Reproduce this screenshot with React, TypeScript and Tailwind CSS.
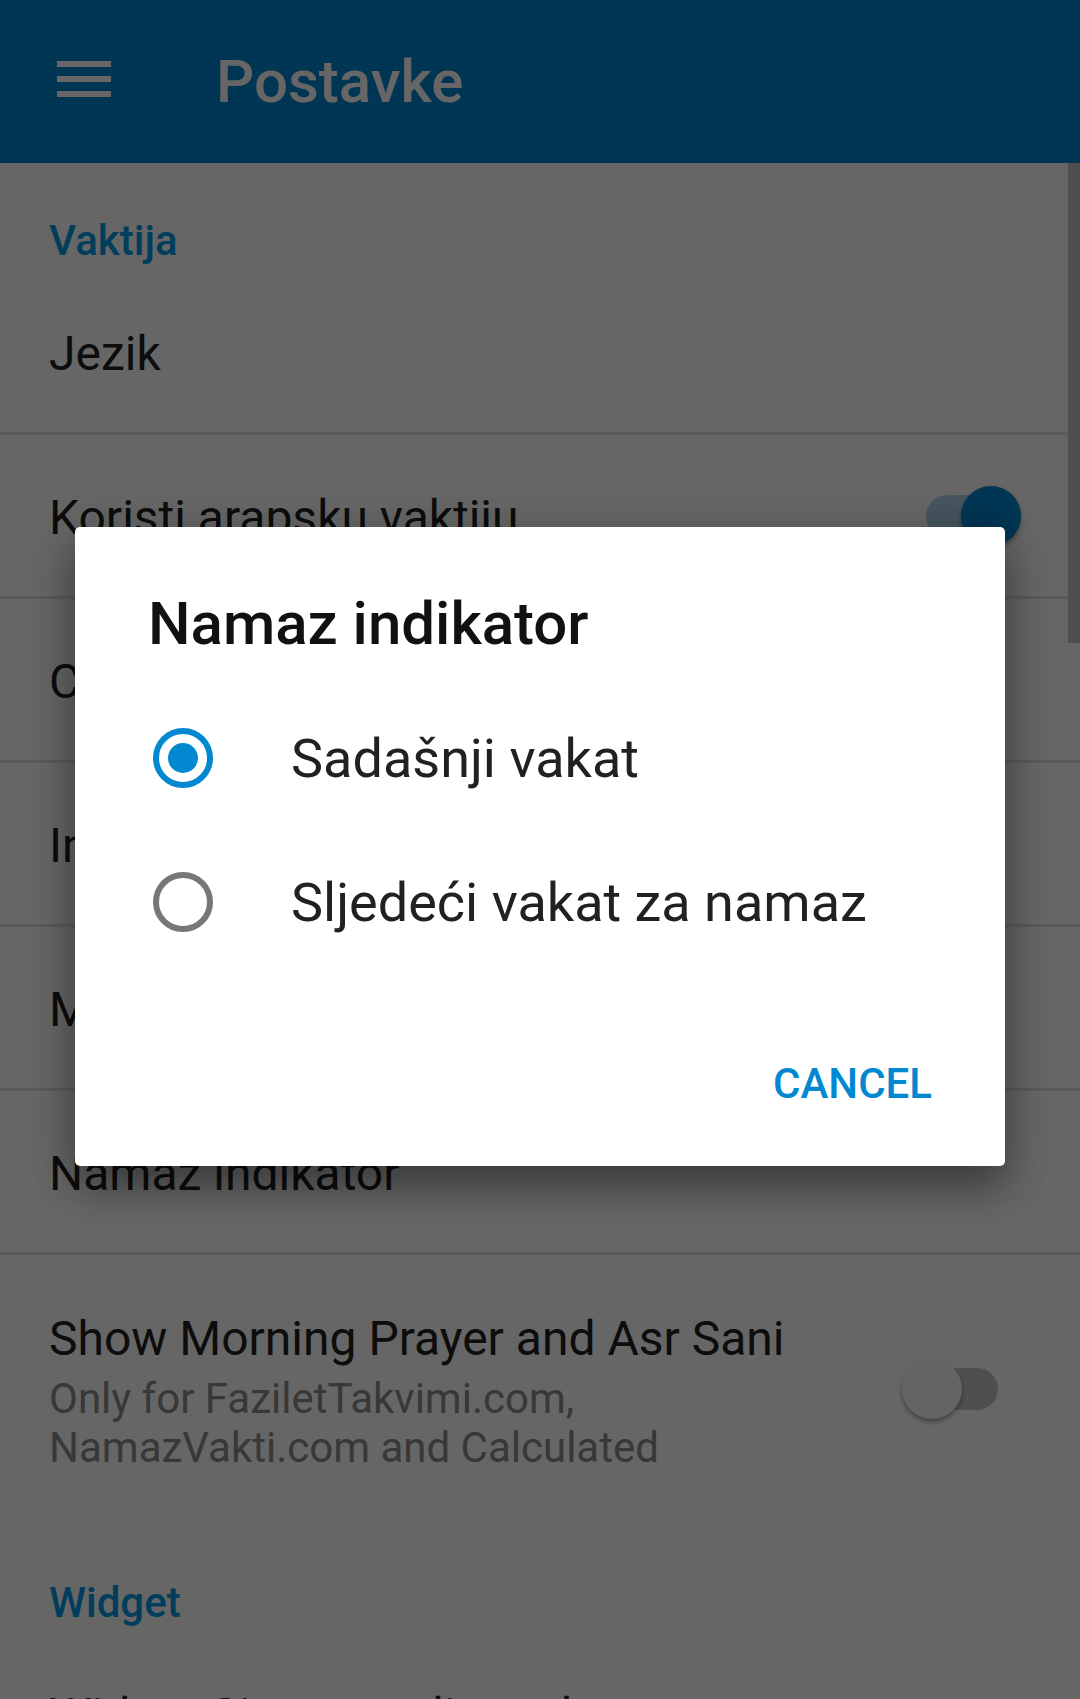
import React from "react";

const blue = "#0288d1";

function Toggle({ on }: { on: boolean }) {
  return (
    <div className="relative w-[119px] h-[60px] shrink-0">
      <div
        className={
          "absolute left-[24px] top-[9px] w-[72px] h-[42px] rounded-full " +
          (on ? "bg-[#b0d5eb]" : "bg-[#c6c6c6]")
        }
      />
      <div
        className={
          "absolute top-0 w-[60px] h-[60px] rounded-full shadow-[0_3px_5px_rgba(0,0,0,0.35)] " +
          (on ? "left-[59px] bg-[#0288d1]" : "left-0 bg-[#fafafa]")
        }
      />
    </div>
  );
}

function Row({ title, toggle }: { title: string; toggle?: boolean }) {
  return (
    <div className="h-[164px] box-border border-b-[3px] border-[#e4e4e4] flex items-center justify-between pl-[49px] pr-[59px]">
      <span className="text-[48px] leading-[48px] pt-[4px] text-[#212121] whitespace-nowrap">{title}</span>
      {toggle !== undefined && <Toggle on={toggle} />}
    </div>
  );
}

function Category({ label }: { label: string }) {
  return (
    <div className="h-[108px] pt-[57px] pl-[49px]">
      <span className="block text-[42px] leading-[42px] font-medium text-[#039be5]">{label}</span>
    </div>
  );
}

function Radio({ checked, label }: { checked: boolean; label: string }) {
  return (
    <div className="h-[144px] flex items-center">
      <div className="w-[216px] flex pl-[78px]">
        <div
          className={
            "w-[60px] h-[60px] rounded-full border-[6px] flex items-center justify-center box-border " +
            (checked ? "border-[#0288d1]" : "border-[#777777]")
          }
        >
          {checked && <div className="w-[30px] h-[30px] rounded-full bg-[#0288d1]" />}
        </div>
      </div>
      <span className="text-[54px] leading-[54px] pt-[2px] text-[#212121] whitespace-nowrap">{label}</span>
    </div>
  );
}

export default function App() {
  return (
    <div className="relative w-[1080px] h-[1699px] overflow-hidden bg-white font-['Roboto',sans-serif]">
      {/* toolbar */}
      <header className="h-[163px] flex pl-[57px] bg-[#0288d1]">
        <svg width="54" height="36" viewBox="0 0 54 36" className="mt-[61px]">
          <rect x="0" y="0" width="54" height="6" fill="#ffffff" />
          <rect x="0" y="15" width="54" height="6" fill="#ffffff" />
          <rect x="0" y="30" width="54" height="6" fill="#ffffff" />
        </svg>
        <h1 className="ml-[105px] mt-[52px] text-[60px] leading-[60px] font-medium text-white">Postavke</h1>
      </header>

      {/* settings list */}
      <div className="flex flex-col">
        <Category label="Vaktija" />
        <Row title="Jezik" />
        <Row title="Koristi arapsku vaktiju" toggle={true} />
        <Row title="Crvena boja za praznike" />
        <Row title="Intervali obavještenja" />
        <Row title="Mezheb za ikindiju" />
        <Row title="Namaz indikator" />
        <div className="h-[270px] flex items-start justify-between pl-[49px] pr-[59px]">
          <div className="flex flex-col pt-[56px]">
            <span className="text-[48px] leading-[56px] text-[#212121] whitespace-nowrap">
              Show Morning Prayer and Asr Sani
            </span>
            <span className="mt-[7px] text-[42px] leading-[49px] text-[#8c8c8c]">
              Only for FaziletTakvimi.com,
              <br />
              NamazVakti.com and Calculated
            </span>
          </div>
          <div className="mt-[104px]">
            <Toggle on={false} />
          </div>
        </div>
        <Category label="Widget" />
        <Row title="Widget Sivo pozadina teksta" />
      </div>

      {/* scrollbar */}
      <div className="absolute right-0 top-[163px] w-[12px] h-[480px] bg-[#c5c5c5]" />

      {/* scrim */}
      <div className="absolute inset-0 bg-black/60" />

      {/* dialog */}
      <div className="absolute left-[75px] top-[527px] w-[930px] h-[639px] bg-white rounded-[5px] shadow-[0_24px_38px_rgba(0,0,0,0.28),0_9px_46px_rgba(0,0,0,0.22)] flex flex-col">
        <h2 className="pl-[73px] pt-[67px] text-[60px] leading-[60px] font-medium text-[#111111]">Namaz indikator</h2>
        <div className="mt-[32px] flex flex-col">
          <Radio checked={true} label="Sadašnji vakat" />
          <Radio checked={false} label="Sljedeći vakat za namaz" />
        </div>
        <div className="mt-[89px] flex justify-end pr-[73px]">
          <span className="text-[42px] leading-[42px] font-medium" style={{ color: blue }}>
            CANCEL
          </span>
        </div>
      </div>
    </div>
  );
}
